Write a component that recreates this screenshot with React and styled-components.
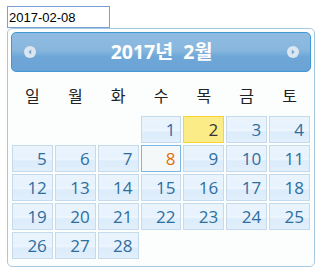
import styled, { createGlobalStyle, css } from "styled-components";

const GlobalStyle = createGlobalStyle`
    body {
        margin: 0;
        background: #ffffff;
    }
`;

const FONT = `"Open Sans", "Noto Sans CJK KR", sans-serif`;

const Page = styled.div`
    padding: 6px 0 0 7px;
`;

const DateInput = styled.input`
    display: block;
    width: 103px;
    height: 22px;
    box-sizing: border-box;
    border: 1px solid #7a9fd6;
    padding: 0 1px;
    margin: 0;
    font-family: "Liberation Sans", Arial, sans-serif;
    font-size: 13px;
    color: #000;
    outline: none;
    background: #fff;
`;

const Picker = styled.div`
    width: 308px;
    box-sizing: border-box;
    border: 1px solid #a6c9e2;
    border-radius: 5px;
    background: #fcfdfd;
    padding: 3px 3px 6px;
    font-family: ${FONT};
`;

const Header = styled.div`
    display: flex;
    align-items: center;
    justify-content: space-between;
    height: 40px;
    box-sizing: border-box;
    border: 1px solid #4297d7;
    border-radius: 5px;
    padding: 0 11px 0 12px;
    background: linear-gradient(
        to bottom,
        #90bce1 0%,
        #88b6dd 45%,
        #7db0dc 52%,
        #6ea7d7 62%,
        #6aa3d4 100%
    );
`;

const Title = styled.div`
    color: #ffffff;
    font-weight: bold;
    font-size: 19.5px;
    line-height: 1;
    word-spacing: 5px;
`;

const NavButton = styled.span`
    display: flex;
    width: 12px;
    height: 12px;

    svg {
        width: 12px;
        height: 12px;
    }
`;

const Grid = styled.div`
    display: grid;
    grid-template-columns: repeat(7, 1fr);
`;

const WeekDay = styled.div`
    height: 43px;
    display: flex;
    align-items: center;
    justify-content: center;
    font-size: 16px;
    color: #222222;
    padding-top: 2px;
    box-sizing: border-box;
`;

const DayCell = styled.div`
    padding: 1px;
`;

const variants = {
    normal: css`
        border-color: #c5dbec;
        color: #2e6e9e;
        background: linear-gradient(
            to bottom,
            #eaf4fd 0%,
            #e6f2fd 45%,
            #f0f7fe 52%,
            #dcecfb 60%,
            #e2effc 100%
        );
    `,
    today: css`
        border-color: #fad42e;
        color: #363636;
        background: #fbec88;
    `,
    active: css`
        border-color: #79b7e7;
        color: #e17009;
        background: #f5f8f9;
    `,
};

const Day = styled.a`
    display: block;
    height: 27px;
    box-sizing: border-box;
    border: 1px solid;
    text-align: right;
    padding-right: 5px;
    font-size: 17px;
    line-height: 25px;
    text-decoration: none;
    ${props => variants[props.$variant || "normal"]}
`;

const PrevIcon = () => (
    <svg viewBox="0 0 12 12">
        <circle cx="6" cy="6" r="6" fill="#dbe6f0" />
        <path d="M7.2 3.6 L4.4 6 L7.2 8.4 Z" fill="#7aa4cc" />
    </svg>
);

const NextIcon = () => (
    <svg viewBox="0 0 12 12">
        <circle cx="6" cy="6" r="6" fill="#dbe6f0" />
        <path d="M4.8 3.6 L7.6 6 L4.8 8.4 Z" fill="#7aa4cc" />
    </svg>
);

const WEEKDAYS = ["일", "월", "화", "수", "목", "금", "토"];
const FIRST_WEEKDAY = 3;
const DAYS_IN_MONTH = 28;
const TODAY = 2;
const SELECTED = 8;

export default function App() {
    const cells = [];
    for (let i = 0; i < FIRST_WEEKDAY; i++) cells.push(null);
    for (let d = 1; d <= DAYS_IN_MONTH; d++) cells.push(d);

    return (
        <>
            <GlobalStyle />
            <Page>
                <DateInput defaultValue="2017-02-08" readOnly />
                <Picker>
                    <Header>
                        <NavButton><PrevIcon /></NavButton>
                        <Title>2017년 2월</Title>
                        <NavButton><NextIcon /></NavButton>
                    </Header>
                    <Grid>
                        {WEEKDAYS.map(w => (
                            <WeekDay key={w}>{w}</WeekDay>
                        ))}
                        {cells.map((d, i) => (
                            <DayCell key={i}>
                                {d && (
                                    <Day
                                        $variant={d === TODAY ? "today" : d === SELECTED ? "active" : "normal"}
                                    >
                                        {d}
                                    </Day>
                                )}
                            </DayCell>
                        ))}
                    </Grid>
                </Picker>
            </Page>
        </>
    );
}
